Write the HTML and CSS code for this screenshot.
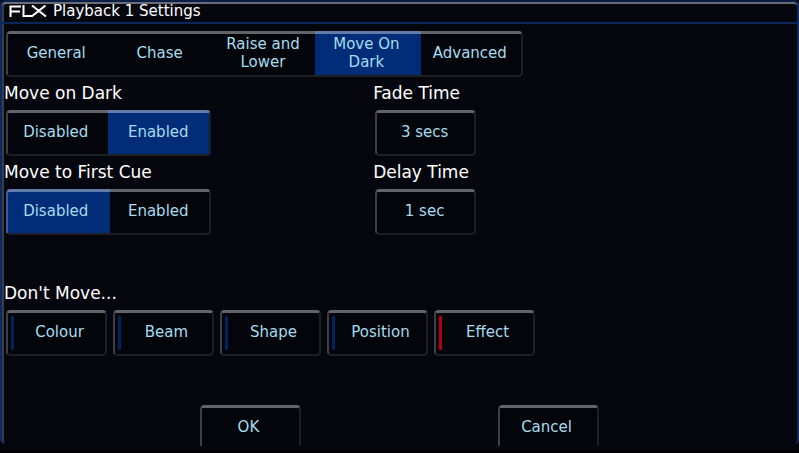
FILE: index.html
```html
<!DOCTYPE html>
<html lang="en">
<head>
	<title>Playback 1 Settings</title>
	<meta charset="UTF-8">
	<meta name="viewport" content="width=device-width, initial-scale=1.0">
	<link rel="stylesheet" href="styles.css">
</head>
<body>
	<div class="window">
		<header class="titlebar">
			<svg class="logo" width="38" height="12" viewBox="0 0 38 12" role="img" aria-label="FLX">
				<path d="M1.5 12V1.5H12M1.5 6.5H11M14.5 0V11H24M23 0.5L37 11.5M36.5 0.5L22.5 11.5" fill="none" stroke="#fff" stroke-width="2"/>
			</svg>
			<h1>Playback 1 Settings</h1>
		</header>
		<main>
			<nav class="group tabs">
				<button class="segment">General</button>
				<button class="segment">Chase</button>
				<button class="segment">Raise and<br>Lower</button>
				<button class="segment selected">Move On<br>Dark</button>
				<button class="segment">Advanced</button>
			</nav>

			<div class="settings">
				<section>
					<h2 id="mod">Move on Dark</h2>
					<div class="group pair" role="group" aria-labelledby="mod">
						<button class="segment">Disabled</button>
						<button class="segment selected">Enabled</button>
					</div>
				</section>
				<section>
					<h2 id="fade">Fade Time</h2>
					<button class="group key" aria-describedby="fade">3 secs</button>
				</section>
				<section>
					<h2 id="first">Move to First Cue</h2>
					<div class="group pair" role="group" aria-labelledby="first">
						<button class="segment selected">Disabled</button>
						<button class="segment">Enabled</button>
					</div>
				</section>
				<section>
					<h2 id="delay">Delay Time</h2>
					<button class="group key" aria-describedby="delay">1 sec</button>
				</section>
			</div>

			<section class="dont-move">
				<h2>Don't Move...</h2>
				<div class="toggles">
					<button class="group key toggle" aria-pressed="false">Colour</button>
					<button class="group key toggle" aria-pressed="false">Beam</button>
					<button class="group key toggle" aria-pressed="false">Shape</button>
					<button class="group key toggle" aria-pressed="false">Position</button>
					<button class="group key toggle on" aria-pressed="true">Effect</button>
				</div>
			</section>
		</main>
		<footer>
			<button class="group key">OK</button>
			<button class="group key">Cancel</button>
		</footer>
	</div>
</body>
</html>
```
FILE: styles.css
```css
* {
	box-sizing: border-box;
}
body {
	margin: 0;
	height: 100vh;
	overflow: hidden;
	background: #06070e;
	border-bottom: 3px solid #020004;
	font-family: "DejaVu Sans", sans-serif;
	font-size: 15px;
	line-height: 18px;
	color: #fff;
}
h1, h2 {
	margin: 0;
	font-weight: normal;
}
h1 {
	font-size: 15px;
}
h2 {
	font-size: 17px;
	line-height: 20px;
	margin-bottom: 7px;
}
button {
	font: inherit;
	color: #a5dcee;
	background: none;
	border: 0;
	padding: 0;
	cursor: pointer;
}

/* outer frame */
.window {
	display: flex;
	flex-direction: column;
	height: calc(100vh - 9px);
	border: 2px solid #0d2a5e;
	border-top-color: #0a1f46;
	border-bottom: 0;
	border-radius: 5px;
	box-shadow: inset 2px 2px #3b3b46;
}
.titlebar {
	display: flex;
	align-items: center;
	gap: 6px;
	height: 22px;
	padding: 0 7px 4px;
	border-top: 2px solid #6b6d78;
	border-bottom: 2px solid #0b2659;
	border-radius: 4px 4px 0 0;
}
.logo {
	background: #0a0a0c;
}
main {
	padding: 7px 2px 0;
}

/* raised edge drawn over the buttons */
.group {
	position: relative;
	display: grid;
	height: 46px;
	padding-bottom: 2px;
	margin-left: 2px;
	border-radius: 4px;
	background: #04050b;
	overflow: hidden;
}
.group::after {
	content: "";
	position: absolute;
	inset: 0;
	border: 2px solid #1e1f25;
	border-top: 3px solid rgba(255, 255, 255, 0.38);
	border-left: 2px solid rgba(255, 255, 255, 0.23);
	border-radius: 4px;
	pointer-events: none;
}
.tabs {
	width: 517px;
	max-width: 100%;
	grid-template-columns: repeat(5, 1fr);
	margin-bottom: 6px;
}
.pair {
	width: 205px;
	grid-template-columns: 1fr 1fr;
}
.segment {
	padding-right: 3px;
}
.selected {
	background: #002c78;
	margin: 0 -1px;
}
.key {
	width: 101px;
	padding-right: 2px;
	align-items: center;
	justify-content: center;
}

.settings {
	display: grid;
	grid-template-columns: 7fr 8fr;
	row-gap: 6px;
}
.dont-move {
	margin-top: 48px;
}
.toggles {
	display: flex;
	gap: 4px;
}
.toggle {
	padding-left: 8px;
}
.toggle::before {
	content: "";
	position: absolute;
	left: 5px;
	top: 6px;
	bottom: 6px;
	width: 3px;
	border-radius: 1px;
	background: #00245c;
}
.on::before {
	background: #b8000e;
}

footer {
	display: flex;
	justify-content: space-around;
	padding: 0 12.5%;
	margin-top: auto;
	margin-bottom: -2px;
}
footer .key {
	height: 41px;
	padding: 2px 4px 0 0;
	margin: 0;
	border-radius: 4px 4px 0 0;
}
footer .key::after {
	border-bottom: 0;
	border-radius: 4px 4px 0 0;
}
```
